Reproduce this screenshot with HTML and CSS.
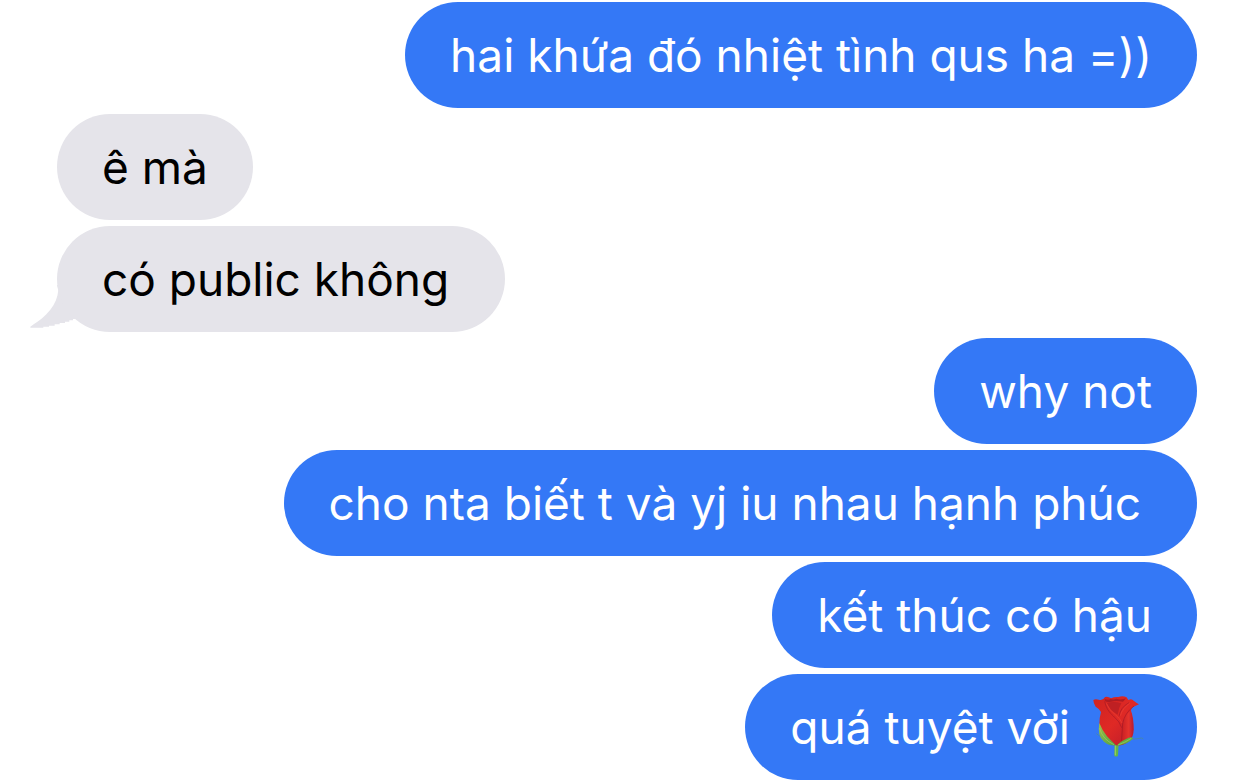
FILE: index.html
```html
<!DOCTYPE html>
<html lang="vi">
<head>
<meta charset="utf-8">
<meta name="viewport" content="width=device-width, initial-scale=1">
<title>Messages</title>
<link rel="stylesheet" href="styles.css">
</head>
<body>
<main class="thread">
<p class="bubble sent">hai khứa đó nhiệt tình qus ha =))</p>
<p class="bubble received">ê mà</p>
<p class="bubble received spaced">có public không
<svg class="tail" viewBox="30 225 162 135" aria-hidden="true"><path d="M111 225L115 240C113 263 105 281 91 299C76 318 57 333 41 343L31 350V353H70V350H87V347H104V343H119V339H135V335H148V331H159V327H171L192 320V225Z"/></svg></p>
<p class="bubble sent">why not</p>
<p class="bubble sent spaced">cho nta biết t và yj iu nhau hạnh phúc</p>
<p class="bubble sent">kết thúc có hậu</p>
<p class="bubble sent with-emoji">quá tuyệt vời
<svg class="rose" viewBox="51 51 180 180" role="img" aria-label="Hoa hồng">
<defs>
<linearGradient id="petal" x1="0" y1="0" x2="1" y2="1"><stop offset="0" stop-color="#cf2320"/><stop offset=".5" stop-color="#df2925"/><stop offset="1" stop-color="#b81a2c"/></linearGradient>
<linearGradient id="side" x1="0" y1="0" x2="1" y2="0"><stop offset="0" stop-color="#c92023"/><stop offset=".6" stop-color="#e5332c"/><stop offset="1" stop-color="#b51c34"/></linearGradient>
<linearGradient id="leaf" x1="0" y1="0" x2="1" y2="1"><stop offset="0" stop-color="#9bbf49"/><stop offset="1" stop-color="#4fa245"/></linearGradient>
</defs>
<path d="M134 188L133 227Q138 232 144 227L146 188Z" fill="#62b848"/>
<path d="M136 192L136 226" stroke="#a0d05c" stroke-width="3"/>
<path d="M101 172Q87 169 79 161M172 174Q192 181 214 174Q219 174 219 178" fill="none" stroke="#4b8f8a" stroke-width="2"/>
<path d="M70 60Q76 56 86 59Q99 63 105 51Q114 48 123 55Q133 50 145 51Q158 46 170 52L175 60Q185 54 191 62Q200 69 207 73L194 79Q184 82 183 92Q191 112 191 148Q191 172 178 182Q162 198 138 196Q112 193 98 174Q87 156 88 134Q88 112 93 96Q88 86 77 80Q70 70 70 60Z" fill="url(#petal)"/>
<path d="M181 92Q190 115 190 148Q190 180 156 194Q155 163 156 134Q162 109 181 92Z" fill="url(#side)"/>
<path d="M104 57Q114 62 122 57Q130 60 139 56Q153 61 168 55L159 65Q138 61 123 65Q109 68 105 62Z" fill="#ae1c22"/>
<path d="M111 69Q130 62 154 70Q146 83 143 104Q119 91 111 69Z" fill="#bf2023"/>
<path d="M104 64Q109 91 130 108Q151 126 155 143M177 68Q151 82 147 109M192 78Q164 99 158 130L154 188" fill="none" stroke="#a51926" stroke-width="2"/>
<path d="M109 70Q117 91 137 105Q151 116 156 129M179 70Q158 84 151 107" fill="none" stroke="#ec4335" stroke-width="2"/>
<path d="M88 129Q97 152 111 169Q125 184 138 196Q120 199 102 185Q81 169 88 129Z" fill="url(#leaf)"/>
<path d="M139 197Q153 182 176 173Q184 169 190 175Q172 195 139 197Z" fill="#61ae42"/>
<path d="M89 145Q97 178 132 194M144 195Q166 187 184 175" fill="none" stroke="#a9c963" stroke-width="2"/>
</svg></p>
</main>
</body>
</html>
```
FILE: styles.css
```css
body { margin: 0; background: #fff; font-family: Inter, sans-serif; }
.thread { display: flex; flex-direction: column; gap: 6px; padding: 2px 45px 4px 57px; }
.bubble { position: relative; margin: 0; padding: 23px 45px; border-radius: 53px; font-size: 46px; line-height: 60px; }
.sent { align-self: flex-end; background: #3478f6; color: #fff; }
.received { align-self: flex-start; background: #e5e4ea; color: #000; }
.spaced { padding-right: 56px; }
.with-emoji { display: flex; align-items: center; gap: 17px; padding-right: 50px; }
.tail { position: absolute; left: -27px; bottom: 2px; width: 54px; height: 45px; fill: #e5e4ea; z-index: -1; }
.rose { width: 60px; height: 60px; overflow: visible; }
```
